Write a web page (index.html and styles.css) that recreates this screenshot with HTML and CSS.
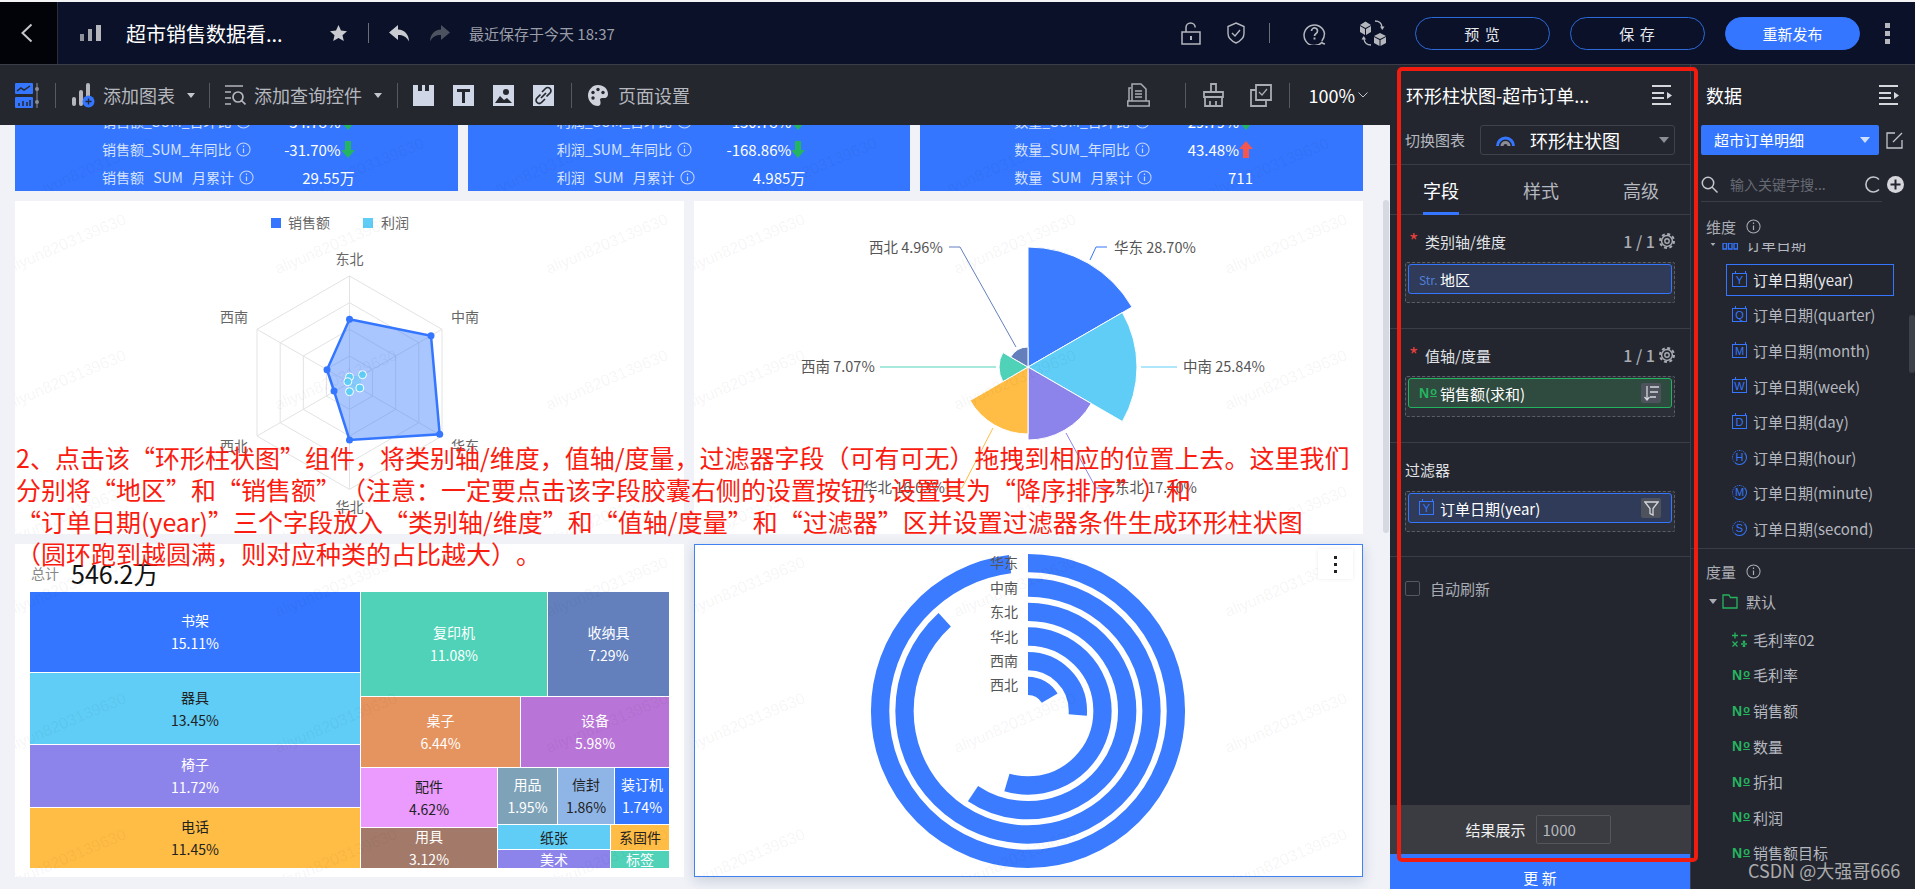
FILE: index.html
```html
<!DOCTYPE html>
<html lang="en">
<head>
    <meta charset="UTF-8">
    <meta name="viewport" content="width=device-width, initial-scale=1.0">
    <title>超市销售数据看板</title>
    <link rel="stylesheet" href="styles.css">
</head>
<body>
    <svg class="qb_defs" width="0" height="0">
        <symbol id="i_collapse" viewBox="0 0 20 20">
            <path d="M0 1h19M0 8h12M0 13h12M0 19h19" stroke="#d5d7dc" stroke-width="2" fill="none"/>
            <path d="M15 7l5 3.5-5 3.5z" fill="#d5d7dc"/>
        </symbol>
        <symbol id="i_gear" viewBox="0 0 16 16">
            <circle cx="8" cy="8" r="5.4" fill="none" stroke="#a9acb3" stroke-width="1.5"/>
            <circle cx="8" cy="8" r="2.2" fill="none" stroke="#a9acb3" stroke-width="1.4"/>
            <circle cx="8" cy="8" r="7" fill="none" stroke="#a9acb3" stroke-width="2" stroke-dasharray="3 2.5"/>
        </symbol>
        <symbol id="i_info" viewBox="0 0 16 16">
            <circle cx="8" cy="8" r="7" fill="none" stroke="currentColor" stroke-width="1.1"/>
            <path d="M8 6.8v5M8 3.8v1.5" stroke="currentColor" stroke-width="1.3"/>
        </symbol>
    </svg>

    <header class="qb_header">
        <a class="qb_back">
            <svg width="13" height="20" viewBox="0 0 13 20"><polyline points="11.5,1.5 2.5,10 11.5,18.5" fill="none" stroke="#c4c6cc" stroke-width="2"/></svg>
        </a>
        <svg class="qb_hd_bars" width="21" height="16" viewBox="0 0 21 16">
            <rect x="0" y="9" width="4" height="7" fill="#8f9198"/>
            <rect x="8" y="4" width="4" height="12" fill="#a5a7ad"/>
            <rect x="16" y="0" width="5" height="16" fill="#b5b7bd"/>
        </svg>
        <div class="qb_hd_title">超市销售数据看...</div>
        <svg class="qb_hd_star" width="17" height="16" viewBox="0 0 17 16"><polygon points="8.5,0 11,5.6 17,6.2 12.5,10.2 13.8,16 8.5,13 3.2,16 4.5,10.2 0,6.2 6,5.6" fill="#c9cbd1"/></svg>
        <span class="qb_hd_div"></span>
        <svg class="qb_hd_undo" width="21" height="17" viewBox="0 0 21 17"><path d="M9 0L0 7.5 9 15V10C14 10 17.500 11.500 20 16.500 20 9.500 15.500 4.800 9 4.500Z" fill="#c9cbd1"/></svg>
        <svg class="qb_hd_redo" width="21" height="17" viewBox="0 0 21 17"><path d="M12 0L21 7.500 12 15V10C7 10 3.500 11.500 1 16.500 1 9.500 5.500 4.800 12 4.500Z" fill="#4d5260"/></svg>
        <div class="qb_hd_saved">最近保存于今天 18:37</div>

        <div class="qb_hd_right">
            <svg width="20" height="23" viewBox="0 0 20 23" fill="none" stroke="#b5b7bd" stroke-width="1.5">
                <rect x="1" y="10" width="18" height="12"/>
                <path d="M5 10V5.500a4.600 4.600 0 0 1 9.200 0"/>
                <path d="M10 14v4" stroke-width="2"/>
            </svg>
            <svg class="qb_hd_shield" width="18" height="22" viewBox="0 0 18 22" fill="none" stroke="#b5b7bd" stroke-width="1.4">
                <path d="M9 1l8 3.500v7C17 16 13.500 19 9 21 4.500 19 1 16 1 11.500v-7z"/>
                <path d="M5 11l3 3 5-6"/>
            </svg>
            <span class="qb_hd_div qb_hd_div2"></span>
            <svg class="qb_hd_help" width="23" height="23" viewBox="0 0 23 23" fill="none" stroke="#b5b7bd" stroke-width="1.5">
                <path d="M22 22c-1.500-.3-2.500-.8-3.200-1.600A10.300 10.300 0 1 1 21.500 11.500c0 3-1 5.500-2.700 7.500"/>
                <path d="M8.500 9a3 3 0 1 1 4.600 2.500c-1 .7-1.600 1.300-1.600 2.500" stroke-width="1.700"/>
                <path d="M11.500 15.500v2" stroke-width="1.900"/>
            </svg>
            <svg class="qb_hd_cube" width="26" height="26" viewBox="0 0 26 26" fill="#b5b7bd">
                <path d="M0 5l5.500-3.500L11 5 5.500 8zM0 6l5 3v6l-5-3zM11 6L6 9v6l5-3z"/>
                <path d="M14 16l6-3 6 3-6 3zM14 17l5.500 3v6L14 23zM26 17l-5.500 3v6l5.500-3z"/>
                <path d="M15 1c4 0 6.500 2 7 6" fill="none" stroke="#b5b7bd" stroke-width="1.300"/>
                <path d="M20 6.500h4.500L22.300 10z"/>
                <path d="M11 25c-4 0-6.500-2-7-6" fill="none" stroke="#b5b7bd" stroke-width="1.300"/>
                <path d="M6 19.500H1.500L3.700 16z"/>
            </svg>
            <a class="qb_hd_btn">预 览</a>
            <a class="qb_hd_btn">保 存</a>
            <a class="qb_hd_btn qb_hd_btn_on">重新发布</a>
            <span class="qb_hd_dots"><i></i><i></i><i></i></span>
        </div>
    </header>

    <div class="qb_body">
        <section class="qb_editor">
            <div class="qb_toolbar">
                <svg class="qb_tb_layout" width="25" height="25" viewBox="0 0 25 25">
                    <rect x="0" y="0" width="18" height="11" rx="1" fill="#3476ff"/>
                    <rect x="0" y="14" width="18" height="11" rx="1" fill="#3476ff"/>
                    <path d="M2 8l4-3 3 2 6-4" fill="none" stroke="#25272e" stroke-width="1.500"/>
                    <path d="M4 23v-3M8 23v-5M12 23v-4M15 23v-6" stroke="#25272e" stroke-width="1.500"/>
                    <path d="M22 0v25" stroke="#8b8e96" stroke-width="1"/>
                    <circle cx="22" cy="6" r="2" fill="#8b8e96"/>
                    <circle cx="22" cy="19" r="2" fill="#8b8e96"/>
                </svg>
                <span class="qb_tb_div"></span>
                <svg class="qb_tb_add" width="23" height="25" viewBox="0 0 23 25">
                    <rect x="0" y="14" width="4" height="9" rx="2" fill="#b5b7bd"/>
                    <rect x="7" y="7" width="4" height="16" rx="2" fill="#b5b7bd"/>
                    <rect x="14" y="0" width="4" height="16" rx="2" fill="#b5b7bd"/>
                    <circle cx="16.500" cy="18.500" r="6" fill="#3476ff"/>
                    <path d="M13.500 18.500h6M16.500 15.500v6" stroke="#25272e" stroke-width="1.300"/>
                </svg>
                <span class="qb_tb_text">添加图表</span>
                <i class="qb_caret"></i>
                <span class="qb_tb_div qb_tb_div_b"></span>
                <svg class="qb_tb_query" width="21" height="21" viewBox="0 0 21 21" fill="none" stroke="#b5b7bd" stroke-width="1.700">
                    <path d="M0 1h18M0 7h6M0 13h6M0 19h6"/>
                    <circle cx="13" cy="12" r="5"/>
                    <path d="M16.500 15.500l4 4"/>
                </svg>
                <span class="qb_tb_text qb_tb_text_q">添加查询控件</span>
                <i class="qb_caret qb_caret_q"></i>
                <span class="qb_tb_div qb_tb_div_c"></span>
                <svg class="qb_tb_icon" width="21" height="21" viewBox="0 0 21 21"><path d="M0 0h5v6h4V0h3v6h4V0h5v21H0z" fill="#cfd6e6"/></svg>
                <svg class="qb_tb_icon" width="21" height="21" viewBox="0 0 21 21"><rect width="21" height="21" fill="#cfd6e6"/><path d="M4 4h13v3h-5v11H9V7H4z" fill="#25272e"/></svg>
                <svg class="qb_tb_icon" width="21" height="21" viewBox="0 0 21 21"><rect width="21" height="21" fill="#cfd6e6"/><circle cx="13" cy="7" r="3" fill="#25272e"/><path d="M2 18l5-7 4 4 3-2 5 5z" fill="#25272e"/></svg>
                <svg class="qb_tb_icon" width="21" height="21" viewBox="0 0 21 21"><rect width="21" height="21" fill="#cfd6e6"/><g fill="none" stroke="#25272e" stroke-width="1.700"><path d="M9 7l3.500-3.500a3 3 0 0 1 4.500 4.500L13.500 11.500"/><path d="M12 14l-3.500 3.500a3 3 0 0 1-4.500-4.500L7.500 9.500"/><path d="M8 13l5-5"/></g></svg>
                <span class="qb_tb_div qb_tb_div_d"></span>
                <svg class="qb_tb_palette" width="20" height="21" viewBox="0 0 20 21">
                    <path d="M10 0c5.500 0 10 3.800 10 9 0 3.500-3 4.500-5 4-2-.4-3.500.6-2.800 2.600.6 1.800.8 5.400-2.200 5.400C4.500 21 0 16 0 10.500S4.500 0 10 0z" fill="#cfd2da"/>
                    <circle cx="5" cy="7.500" r="1.700" fill="#25272e"/><circle cx="10" cy="4.500" r="1.700" fill="#25272e"/><circle cx="15" cy="7.500" r="1.700" fill="#25272e"/><circle cx="5" cy="13" r="1.700" fill="#25272e"/>
                </svg>
                <span class="qb_tb_text qb_tb_text_p">页面设置</span>
                <div class="qb_tb_right">
                    <svg width="23" height="24" viewBox="0 0 23 24" fill="none" stroke="#a9acb3" stroke-width="1.500">
                        <path d="M5 18V1h9l5 5v12M4 5H2v13"/>
                        <path d="M8 8h7M8 11h7M8 14h7"/>
                        <path d="M0.800 18h21.400v5H.800z"/>
                    </svg>
                    <span class="qb_tb_div qb_tb_div_e"></span>
                    <svg class="qb_tb_brush" width="21" height="24" viewBox="0 0 21 24" fill="none" stroke="#a9acb3" stroke-width="1.800">
                        <path d="M8 8V1h5v7M1 9h19v5H1zM2 14v9h17v-9M7 18v5M13 18v5"/>
                    </svg>
                    <svg class="qb_tb_copy" width="22" height="23" viewBox="0 0 22 23" fill="none" stroke="#a9acb3" stroke-width="1.800">
                        <path d="M6 1h15v15H6zM6 6H1v16h15v-6"/>
                        <path d="M9 8l3 3 5-6" stroke-width="1.300"/>
                    </svg>
                    <span class="qb_tb_div qb_tb_div_f"></span>
                    <span class="qb_tb_zoom">100%</span>
                    <svg width="10" height="6" viewBox="0 0 10 6"><polyline points="0.500,.500 5,5 9.500,.500" fill="none" stroke="#c4c6cc" stroke-width="1"/></svg>
                </div>
            </div>

            <div class="qb_canvas">
                <div class="qb_kpi_row">
                    <div class="qb_kpi qb_kpi_a">
                        <div class="qb_wm" data-n="2"></div>
                        <div class="qb_kpi_line"><span>销售额_SUM_日环比</span><svg class="qb_i_info"><use href="#i_info"/></svg><b>-34.78%</b><svg class="qb_arrow" viewBox="0 0 14 17"><path d="M4 0h6v9h4l-7 8-7-8h4z" fill="#25b45f"/></svg></div>
                        <div class="qb_kpi_line"><span>销售额_SUM_年同比</span><svg class="qb_i_info"><use href="#i_info"/></svg><b>-31.70%</b><svg class="qb_arrow" viewBox="0 0 14 17"><path d="M4 0h6v9h4l-7 8-7-8h4z" fill="#25b45f"/></svg></div>
                        <div class="qb_kpi_line"><span class="qb_kpi_sp">销售额 SUM 月累计</span><svg class="qb_i_info"><use href="#i_info"/></svg><b>29.55万</b></div>
                    </div>
                    <div class="qb_kpi qb_kpi_b">
                        <div class="qb_wm" data-n="2"></div>
                        <div class="qb_kpi_line"><span>利润_SUM_日环比</span><svg class="qb_i_info"><use href="#i_info"/></svg><b>-130.78%</b><svg class="qb_arrow" viewBox="0 0 14 17"><path d="M4 0h6v9h4l-7 8-7-8h4z" fill="#25b45f"/></svg></div>
                        <div class="qb_kpi_line"><span>利润_SUM_年同比</span><svg class="qb_i_info"><use href="#i_info"/></svg><b>-168.86%</b><svg class="qb_arrow" viewBox="0 0 14 17"><path d="M4 0h6v9h4l-7 8-7-8h4z" fill="#25b45f"/></svg></div>
                        <div class="qb_kpi_line"><span class="qb_kpi_sp">利润 SUM 月累计</span><svg class="qb_i_info"><use href="#i_info"/></svg><b>4.985万</b></div>
                    </div>
                    <div class="qb_kpi qb_kpi_c">
                        <div class="qb_wm" data-n="2"></div>
                        <div class="qb_kpi_line"><span>数量_SUM_日环比</span><svg class="qb_i_info"><use href="#i_info"/></svg><b>29.79%</b><svg class="qb_arrow" viewBox="0 0 14 17"><path d="M4 0h6v9h4l-7 8-7-8h4z" fill="#25b45f"/></svg></div>
                        <div class="qb_kpi_line"><span>数量_SUM_年同比</span><svg class="qb_i_info"><use href="#i_info"/></svg><b>43.48%</b><svg class="qb_arrow" viewBox="0 0 14 17"><path d="M7 0l7 8h-4v9H4V8H0z" fill="#f4574f"/></svg></div>
                        <div class="qb_kpi_line"><span class="qb_kpi_sp">数量 SUM 月累计</span><svg class="qb_i_info"><use href="#i_info"/></svg><b>711</b></div>
                    </div>
                </div>

                <div class="qb_chart_grid">
                    <!-- radar -->
                    <div class="qb_card">
                        <svg class="qb_chart" width="669" height="333" viewBox="15 201 669 333">
                            <rect x="271" y="218" width="10" height="10" fill="#3476ff"/>
                            <text x="288" y="228" class="qb_ct">销售额</text>
                            <rect x="363" y="218" width="10" height="10" fill="#5fcdf6"/>
                            <text x="381" y="228" class="qb_ct">利润</text>
                            <g fill="none" stroke="#e3e3e3" stroke-width="1">
                                <polygon points="349.500,276 442,329.300 442,436 349.500,489.400 257,436 257,329.300"/>
                                <polygon points="349.500,302.700 418.800,342.700 418.800,422.700 349.500,462.700 280.200,422.700 280.200,342.700"/>
                                <polygon points="349.500,329.300 395.700,356 395.700,409.400 349.500,436 303.300,409.400 303.300,356"/>
                                <polygon points="349.500,356 372.600,369.300 372.600,396 349.500,409.400 326.400,396 326.400,369.300"/>
                                <path d="M349.500 276V489.400M257 329.300L442 436M442 329.300L257 436"/>
                            </g>
                            <polygon points="349.500,319.300 431,335.700 439.700,434.300 349.500,440 334,391 327,369.700" fill="#3476ff" fill-opacity=".42" stroke="#3476ff" stroke-width="2.500"/>
                            <g fill="#3476ff">
                                <circle cx="349.500" cy="319.300" r="3.500"/><circle cx="431" cy="335.700" r="3.500"/><circle cx="439.700" cy="434.300" r="3.500"/>
                                <circle cx="349.500" cy="440" r="3.500"/><circle cx="334" cy="391" r="3.500"/><circle cx="327" cy="369.700" r="3.500"/>
                            </g>
                            <polygon points="349.500,377 362.500,374.700 359.800,388 349.500,391.700 347.800,381.700" fill="#5fcdf6" fill-opacity=".5"/>
                            <g fill="#5fcdf6" stroke="#fff" stroke-width="1">
                                <circle cx="349.500" cy="377" r="4"/><circle cx="362.500" cy="374.700" r="4"/><circle cx="359.800" cy="388" r="4"/>
                                <circle cx="349.500" cy="391.700" r="4"/><circle cx="347.800" cy="381.700" r="4"/>
                            </g>
                            <g class="qb_ct" text-anchor="middle">
                                <text x="349.500" y="264">东北</text><text x="465" y="322">中南</text><text x="234" y="322">西南</text>
                                <text x="465" y="451">华东</text><text x="234" y="451">西北</text><text x="349.500" y="512">华北</text>
                            </g>
                        </svg>
                        <div class="qb_wm"></div>
                    </div>

                    <!-- rose pie -->
                    <div class="qb_card">
                        <svg class="qb_chart" width="669" height="333" viewBox="694 201 669 333">
                            <g stroke="#fff" stroke-width="1">
                                <path d="M1028 367V247A120 120 0 0 1 1132 307Z" fill="#3b7bff"/>
                                <path d="M1028 367L1122.400 312.500A109 109 0 0 1 1122.400 421.500Z" fill="#5fcdf6"/>
                                <path d="M1028 367L1091.200 403.500A73 73 0 0 1 1028 440Z" fill="#8d84eb"/>
                                <path d="M1028 367V434A67 67 0 0 1 970 400.500Z" fill="#ffbd45"/>
                                <path d="M1028 367L1002.900 381.500A29 29 0 0 1 1002.900 352.500Z" fill="#4fd2b8"/>
                                <path d="M1028 367L1010.700 357A20 20 0 0 1 1028 347Z" fill="#6380bc"/>
                            </g>
                            <g fill="none" stroke-width="1">
                                <polyline points="1090,260 1096,247 1107,247" stroke="#3476ff"/>
                                <polyline points="1016,347 960,247 949,247" stroke="#6380bc"/>
                                <polyline points="1141,367 1177,367" stroke="#5fcdf6"/>
                                <polyline points="996,367 880,367" stroke="#4fd2b8"/>
                                <polyline points="993,428 962,488 945,488" stroke="#ffbd45"/>
                                <polyline points="1066,433 1096,488 1108,488" stroke="#8d84eb"/>
                            </g>
                            <g class="qb_ct qb_ct_l">
                                <text x="1114" y="253">华东 28.70%</text>
                                <text x="869" y="253">西北 4.96%</text>
                                <text x="1183" y="372">中南 25.84%</text>
                                <text x="801" y="372">西南 7.07%</text>
                                <text x="863" y="493">华北 16.03%</text>
                                <text x="1115" y="493">东北 17.40%</text>
                            </g>
                        </svg>
                        <div class="qb_wm"></div>
                    </div>

                    <!-- treemap -->
                    <div class="qb_card qb_tree_card">
                        <div class="qb_tree_head"><span class="qb_tree_lbl">总计</span><span class="qb_tree_total">546.2万</span></div>
                        <div class="qb_tree">
                            <div class="qb_tree_col" style="width:330px">
                                <div class="qb_tile qb_c1" style="height:80px">书架<br>15.11%</div>
                                <div class="qb_tile qb_c2" style="height:71px">器具<br>13.45%</div>
                                <div class="qb_tile qb_c3" style="height:62px">椅子<br>11.72%</div>
                                <div class="qb_tile qb_c4" style="height:60px">电话<br>11.45%</div>
                            </div>
                            <div class="qb_tree_col" style="width:308px">
                                <div class="qb_tree_row" style="height:104px">
                                    <div class="qb_tile qb_c5" style="width:186px">复印机<br>11.08%</div>
                                    <div class="qb_tile qb_c6" style="width:121px">收纳具<br>7.29%</div>
                                </div>
                                <div class="qb_tree_row" style="height:70px">
                                    <div class="qb_tile qb_c7" style="width:159px">桌子<br>6.44%</div>
                                    <div class="qb_tile qb_c8" style="width:148px">设备<br>5.98%</div>
                                </div>
                                <div class="qb_tree_row" style="height:100px">
                                    <div class="qb_tree_col" style="width:136px">
                                        <div class="qb_tile qb_c9" style="height:59px">配件<br>4.62%</div>
                                        <div class="qb_tile qb_c10" style="height:40px">用具<br>3.12%</div>
                                    </div>
                                    <div class="qb_tree_col" style="width:171px">
                                        <div class="qb_tree_row" style="height:56px">
                                            <div class="qb_tile qb_c11" style="width:59px">用品<br>1.95%</div>
                                            <div class="qb_tile qb_c12" style="width:56px">信封<br>1.86%</div>
                                            <div class="qb_tile qb_c1" style="width:54px">装订机<br>1.74%</div>
                                        </div>
                                        <div class="qb_tree_row" style="height:43px">
                                            <div class="qb_tree_col" style="width:112px">
                                                <div class="qb_tile qb_c2" style="height:24px">纸张</div>
                                                <div class="qb_tile qb_c3" style="height:18px">美术</div>
                                            </div>
                                            <div class="qb_tree_col" style="width:58px">
                                                <div class="qb_tile qb_c4" style="height:25px">系固件</div>
                                                <div class="qb_tile qb_c5" style="height:17px">标签</div>
                                            </div>
                                        </div>
                                    </div>
                                </div>
                            </div>
                        </div>
                        <div class="qb_wm"></div>
                    </div>

                    <!-- ring bars -->
                    <div class="qb_card qb_card_sel">
                        <svg class="qb_chart" width="669" height="333" viewBox="694 544 669 333">
                            <g fill="none" stroke="#3b7bff" stroke-width="18.300" transform="rotate(-90 1028 711)">
                                <circle cx="1028" cy="711" r="147.900" pathLength="360" stroke-dasharray="353 360"/>
                                <circle cx="1028" cy="711" r="123.500" pathLength="360" stroke-dasharray="317.600 360"/>
                                <circle cx="1028" cy="711" r="99.200" pathLength="360" stroke-dasharray="213.700 360"/>
                                <circle cx="1028" cy="711" r="74.500" pathLength="360" stroke-dasharray="196.500 360"/>
                                <circle cx="1028" cy="711" r="49.900" pathLength="360" stroke-dasharray="94.600 360"/>
                                <circle cx="1028" cy="711" r="25.200" pathLength="360" stroke-dasharray="59.400 360"/>
                            </g>
                            <g class="qb_ct qb_ct_r" text-anchor="end">
                                <text x="1018" y="568">华东</text><text x="1018" y="593">中南</text><text x="1018" y="617">东北</text>
                                <text x="1018" y="642">华北</text><text x="1018" y="666">西南</text><text x="1018" y="690">西北</text>
                            </g>
                        </svg>
                        <div class="qb_wm"></div>
                        <div class="qb_card_more"><i></i><i></i><i></i></div>
                    </div>
                </div>
                <div class="qb_canvas_bar"></div>
            </div>
        </section>

        <aside class="qb_props">
            <div class="qb_panel_head">
                <span>环形柱状图-超市订单...</span>
                <svg class="qb_collapse"><use href="#i_collapse"/></svg>
            </div>
            <div class="qb_switch">
                <span class="qb_switch_lbl">切换图表</span>
                <div class="qb_switch_sel">
                    <svg width="19" height="12" viewBox="0 0 19 12" fill="none" stroke-width="3">
                        <path d="M1.500 12a8 8 0 0 1 16 0" stroke="#3476ff"/>
                        <path d="M6 12a3.500 3.500 0 0 1 7 0" stroke="#8b8e96"/>
                    </svg>
                    <span>环形柱状图</span>
                    <i class="qb_caret qb_caret_sel"></i>
                </div>
            </div>
            <div class="qb_tabs">
                <span class="qb_tab qb_tab_on">字段</span>
                <span class="qb_tab">样式</span>
                <span class="qb_tab">高级</span>
            </div>

            <div class="qb_sect">
                <div class="qb_sect_title"><em>*</em><span>类别轴/维度</span><b>1 / 1</b><svg class="qb_gear"><use href="#i_gear"/></svg></div>
                <div class="qb_drop">
                    <div class="qb_pill"><span class="qb_str">Str.</span>地区</div>
                </div>
            </div>
            <div class="qb_sect">
                <div class="qb_sect_title"><em>*</em><span>值轴/度量</span><b>1 / 1</b><svg class="qb_gear"><use href="#i_gear"/></svg></div>
                <div class="qb_drop">
                    <div class="qb_pill qb_pill_g"><span class="qb_no">N<u>o</u></span>销售额(求和)
                        <span class="qb_pill_btn">
                            <svg width="15" height="15" viewBox="0 0 15 15" fill="none" stroke="#d5d7dc" stroke-width="1.300"><path d="M3 0v14M.500 11L3 14l2.500-3M6 1h9M6 6h8M6 11h6"/></svg>
                        </span>
                    </div>
                </div>
            </div>
            <div class="qb_sect">
                <div class="qb_sect_title qb_sect_title_f"><span>过滤器</span></div>
                <div class="qb_drop">
                    <div class="qb_pill"><span class="qb_dt">Y</span>订单日期(year)
                        <span class="qb_pill_btn">
                            <svg width="15" height="15" viewBox="0 0 15 15" fill="none" stroke="#d5d7dc" stroke-width="1.300"><path d="M.800 1h13.400L9 7.500v6.500l-3-1.500v-5z"/></svg>
                        </span>
                    </div>
                </div>
            </div>
            <label class="qb_auto"><span class="qb_check"></span>自动刷新</label>
            <div class="qb_result">
                <span>结果展示</span>
                <span class="qb_result_box">1000</span>
            </div>
            <div class="qb_update">更 新</div>
        </aside>

        <aside class="qb_data">
            <div class="qb_panel_head qb_panel_head_d">
                <span>数据</span>
                <svg class="qb_collapse"><use href="#i_collapse"/></svg>
            </div>
            <div class="qb_ds">
                <div class="qb_ds_sel">超市订单明细<i class="qb_caret qb_caret_ds"></i></div>
                <svg width="17" height="17" viewBox="0 0 17 17" fill="none" stroke="#c4c6cc" stroke-width="1.300"><path d="M9 1H1v15h15V8M7 10L16 1"/></svg>
            </div>
            <div class="qb_search_row">
                <div class="qb_search">
                    <svg width="17" height="17" viewBox="0 0 17 17" fill="none" stroke="#c4c6cc" stroke-width="1.500"><circle cx="7" cy="7" r="5.700"/><path d="M11 11l5.500 5.500"/></svg>
                    <span>输入关键字搜...</span>
                    <svg class="qb_refresh" width="17" height="17" viewBox="0 0 17 17" fill="none" stroke="#c4c6cc" stroke-width="1.600"><path d="M15 3.500A7.500 7.500 0 1 0 15 13.500"/></svg>
                </div>
                <svg width="17" height="17" viewBox="0 0 17 17"><circle cx="8.500" cy="8.500" r="8.500" fill="#d5d7dc"/><path d="M3.500 8.500h10M8.500 3.500v10" stroke="#23262f" stroke-width="2"/></svg>
            </div>
            <div class="qb_group_head qb_group_head_a">维度<svg class="qb_i_group"><use href="#i_info"/></svg></div>
            <div class="qb_list">
                <div class="qb_list_in">
                    <div class="qb_field qb_field_top"><i class="qb_fold"></i>
                        <svg class="qb_hier" width="16" height="13" viewBox="0 0 16 13" fill="none" stroke="#3476ff" stroke-width="1.300"><path d="M1 6h3.500v6H1zM6.500 6H10v6H6.500zM12 6h3.500v6H12zM2.700 6V2M8.200 6V2M13.700 6V2"/></svg>
                        <span>订单日期</span></div>
                    <div class="qb_field qb_field_sel"><span class="qb_dt">Y</span>订单日期(year)</div>
                    <div class="qb_field"><span class="qb_dt">Q</span>订单日期(quarter)</div>
                    <div class="qb_field"><span class="qb_dt">M</span>订单日期(month)</div>
                    <div class="qb_field"><span class="qb_dt">W</span>订单日期(week)</div>
                    <div class="qb_field"><span class="qb_dt">D</span>订单日期(day)</div>
                    <div class="qb_field"><span class="qb_dt qb_dt_r">H</span>订单日期(hour)</div>
                    <div class="qb_field"><span class="qb_dt qb_dt_r">M</span>订单日期(minute)</div>
                    <div class="qb_field"><span class="qb_dt qb_dt_r">S</span>订单日期(second)</div>
                </div>
            </div>
            <div class="qb_group_head qb_group_head_b">度量<svg class="qb_i_group"><use href="#i_info"/></svg></div>
            <div class="qb_field qb_field_top qb_field_dflt"><i class="qb_fold"></i>
                <svg class="qb_hier" width="16" height="15" viewBox="0 0 16 15" fill="none" stroke="#25b45f" stroke-width="1.300"><path d="M1 1h6l1.500 2.500H15V14H1z"/></svg>
                <span>默认</span></div>
            <div class="qb_field"><svg class="qb_calc" width="15" height="15" viewBox="0 0 15 15" stroke="#25b45f" stroke-width="1.300"><path d="M0 3.500h6M3 .500v6M9 3.500h6M.500 9.500l5 5M5.500 9.500l-5 5M9 12h6"/><circle cx="12" cy="9.800" r=".7"/><circle cx="12" cy="14.200" r=".7"/></svg>毛利率02</div>
            <div class="qb_field"><span class="qb_no">N<u>o</u></span>毛利率</div>
            <div class="qb_field"><span class="qb_no">N<u>o</u></span>销售额</div>
            <div class="qb_field"><span class="qb_no">N<u>o</u></span>数量</div>
            <div class="qb_field"><span class="qb_no">N<u>o</u></span>折扣</div>
            <div class="qb_field"><span class="qb_no">N<u>o</u></span>利润</div>
            <div class="qb_field"><span class="qb_no">N<u>o</u></span>销售额目标</div>
            <div class="qb_data_bar"></div>
        </aside>
    </div>

    <div class="qb_redbox"></div>
    <div class="qb_note">2、点击该“环形柱状图”组件，将类别轴/维度，值轴/度量，过滤器字段（可有可无）拖拽到相应的位置上去。这里我们
分别将“地区”和“销售额”（注意：一定要点击该字段胶囊右侧的设置按钮，设置其为“降序排序”）和
“订单日期(year)”三个字段放入“类别轴/维度”和“值轴/度量”和“过滤器”区并设置过滤器条件生成环形柱状图
（圆环跑到越圆满，则对应种类的占比越大）。</div>
    <div class="qb_csdn">CSDN @大强哥666</div>

    <script src="script.js"></script>
</body>
</html>
```
FILE: styles.css
```css
* {
    margin: 0;
    padding: 0;
    box-sizing: border-box;
}

body {
    font-family: "Noto Sans CJK SC", "Liberation Sans", sans-serif;
    background: #f4f4f6;
    color: #333;
    width: 1915px;
    height: 889px;
    overflow: hidden;
    padding-top: 2px;
    position: relative;
}

.qb_defs {
    position: absolute;
}

/* top bar */
.qb_header {
    height: 63px;
    display: flex;
    align-items: center;
    background: #0a1128;
    border-bottom: 1px solid #3a3d47;
}

.qb_back {
    width: 58px;
    height: 100%;
    background: #020308;
    border-right: 1px solid #2a2f3d;
    display: flex;
    align-items: center;
    justify-content: center;
    padding-right: 5px;
}

.qb_hd_bars {
    margin-left: 22px;
}

.qb_hd_title {
    margin-left: 25px;
    width: 204px;
    font-size: 20px;
    color: #fff;
}

.qb_hd_div {
    width: 1px;
    height: 20px;
    background: #6b6e78;
    margin-left: 21px;
}

.qb_hd_undo {
    margin-left: 20px;
}

.qb_hd_redo {
    margin-left: 19px;
}

.qb_hd_saved {
    margin-left: 19px;
    font-size: 15px;
    color: #9a9ea8;
}

.qb_hd_right {
    margin-left: auto;
    display: flex;
    align-items: center;
    height: 100%;
}

.qb_hd_shield {
    margin-left: 26px;
}

.qb_hd_div2 {
    margin-left: 24px;
}

.qb_hd_help {
    margin-left: 33px;
}

.qb_hd_cube {
    margin-left: 34px;
    margin-right: 29px;
}

.qb_hd_btn {
    width: 135px;
    height: 33px;
    line-height: 31px;
    margin-right: 20px;
    text-align: center;
    border: 1px solid #2c69d8;
    border-radius: 17px;
    font-size: 15px;
    color: #e6e8ee;
    letter-spacing: 1px;
}

.qb_hd_btn_on {
    background: #3476ff;
    border-color: #3476ff;
    color: #fff;
    letter-spacing: 0;
    margin-right: 25px;
}

.qb_hd_dots {
    display: flex;
    flex-direction: column;
    gap: 3px;
    margin-right: 25px;
}

.qb_hd_dots i {
    width: 5px;
    height: 5px;
    background: #b5b7bd;
}

/* layout */
.qb_body {
    display: flex;
    height: 824px;
}

.qb_editor {
    width: 1390px;
    display: flex;
    flex-direction: column;
    background: #f0f2f7;
}

/* toolbar */
.qb_toolbar {
    height: 60px;
    flex: none;
    display: flex;
    align-items: center;
    background: #25272e;
    padding-left: 15px;
}

.qb_tb_div {
    width: 1px;
    height: 25px;
    background: #565962;
    margin-left: 15px;
}

.qb_tb_add {
    margin-left: 16px;
}

.qb_tb_text {
    font-size: 18px;
    color: #b5b8bf;
    margin-left: 8px;
}

.qb_caret {
    width: 0;
    height: 0;
    border-left: 4px solid transparent;
    border-right: 4px solid transparent;
    border-top: 5px solid #c4c6cc;
    margin-left: 12px;
}

.qb_tb_query {
    margin-left: 15px;
}

.qb_tb_div_b {
    margin-left: 14px;
}

.qb_tb_text_q {
    margin-left: 8px;
}

.qb_tb_div_c {
    margin-left: 15px;
}

.qb_tb_icon {
    margin-left: 19px;
}

.qb_tb_div_c + .qb_tb_icon {
    margin-left: 15px;
}

.qb_tb_div_d {
    margin-left: 17px;
}

.qb_tb_palette {
    margin-left: 16px;
}

.qb_tb_text_p {
    margin-left: 10px;
}

.qb_tb_right {
    margin-left: auto;
    margin-right: 22px;
    display: flex;
    align-items: center;
}

.qb_tb_div_e {
    margin-left: 35px;
}

.qb_tb_brush {
    margin-left: 17px;
}

.qb_tb_copy {
    margin-left: 26px;
}

.qb_tb_div_f {
    margin-left: 17px;
}

.qb_tb_zoom {
    font-size: 18px;
    color: #fff;
    margin: 0 3px 0 18px;
}

/* canvas */
.qb_canvas {
    flex: 1;
    position: relative;
    overflow: hidden;
    padding: 0 27px 0 15px;
}

.qb_canvas_bar {
    position: absolute;
    top: 75px;
    right: 1px;
    width: 6px;
    height: 333px;
    background: #d6d9e2;
    border-radius: 3px;
}

.qb_kpi_row {
    display: grid;
    grid-template-columns: repeat(3, 1fr);
    gap: 10px;
    height: 66px;
}

.qb_kpi {
    background: #3476ff;
    overflow: hidden;
    position: relative;
    display: flex;
    flex-direction: column;
    justify-content: flex-end;
}

.qb_kpi .qb_wm {
    left: 27px;
}

.qb_kpi_a {
    padding: 0 103px 0 87px;
}

.qb_kpi_b {
    padding: 0 105px 0 89px;
}

.qb_kpi_c {
    padding: 0 110px 0 94px;
}

.qb_kpi_line {
    flex: none;
    height: 28px;
    display: flex;
    align-items: center;
    font-size: 14px;
    color: #d6e3ff;
}

.qb_kpi_sp {
    word-spacing: 6px;
}

.qb_kpi_line b {
    margin-left: auto;
    font-weight: 400;
    font-size: 15px;
    color: #fff;
}

.qb_i_info {
    width: 15px;
    height: 15px;
    margin-left: 5px;
    color: #c3d6ff;
}

.qb_arrow {
    width: 14px;
    height: 17px;
}

/* chart cards */
.qb_chart_grid {
    margin-top: 10px;
    display: grid;
    grid-template-columns: 669px 669px;
    grid-auto-rows: 333px;
    gap: 10px;
}

.qb_card {
    background: #fff;
    position: relative;
    overflow: hidden;
}

.qb_card_sel {
    outline: 1px solid #3f82f0;
    outline-offset: -1px;
    box-shadow: 0 4px 12px rgba(30, 50, 100, 0.18);
}

.qb_chart {
    display: block;
}

.qb_ct {
    font-size: 14px;
    fill: #666;
}

.qb_ct_l {
    font-size: 14.5px;
    fill: #555;
}

.qb_ct_r {
    fill: #555;
}

.qb_wm {
    position: absolute;
    inset: 0;
    overflow: hidden;
    pointer-events: none;
    display: grid;
    grid-template-columns: repeat(3, 271px);
    grid-auto-rows: 136px;
}

.qb_wm span {
    display: block;
    width: 130px;
    margin: 28px 0 0 1px;
    font-family: "Liberation Sans", sans-serif;
    font-size: 16px;
    line-height: 24px;
    color: rgba(0, 0, 0, 0.055);
    white-space: nowrap;
    transform: rotate(-23deg);
}

.qb_card_more {
    position: absolute;
    top: 5px;
    right: 10px;
    width: 35px;
    height: 30px;
    background: #fff;
    box-shadow: 0 0 4px rgba(0, 0, 0, 0.08);
    display: flex;
    flex-direction: column;
    align-items: center;
    justify-content: center;
    gap: 4px;
}

.qb_card_more i {
    width: 3px;
    height: 3px;
    background: #222;
}

/* treemap */
.qb_tree_card {
    padding: 0 15px;
}

.qb_tree_head {
    height: 48px;
    padding-top: 10px;
    display: flex;
    align-items: center;
}

.qb_tree_lbl {
    font-size: 14px;
    color: #888;
    margin-left: 1px;
}

.qb_tree_total {
    font-size: 25px;
    color: #111;
    margin-left: 12px;
}

.qb_tree {
    display: flex;
    gap: 1px;
    height: 276px;
}

.qb_tree_col {
    display: flex;
    flex-direction: column;
    gap: 1px;
}

.qb_tree_row {
    display: flex;
    gap: 1px;
}

.qb_tile {
    display: flex;
    align-items: center;
    justify-content: center;
    text-align: center;
    font-size: 14px;
    line-height: 23px;
    color: #fff;
    overflow: hidden;
}

.qb_c1 { background: #3476ff; }
.qb_c2 { background: #5fcdf6; color: #222; }
.qb_c3 { background: #8d84eb; }
.qb_c4 { background: #ffbd45; color: #222; }
.qb_c5 { background: #4fd2b8; }
.qb_c6 { background: #6380bc; }
.qb_c7 { background: #e6945f; }
.qb_c8 { background: #b874d6; }
.qb_c9 { background: #ea9bfd; color: #222; }
.qb_c10 { background: #a37a69; }
.qb_c11 { background: #7ea2b8; }
.qb_c12 { background: #8fb5e6; color: #222; }

/* property panel */
.qb_props {
    width: 301px;
    display: flex;
    flex-direction: column;
    background: #23262f;
    border-right: 1px solid #3a3d47;
}

.qb_panel_head {
    height: 60px;
    flex: none;
    display: flex;
    align-items: center;
    justify-content: space-between;
    padding: 0 18px 0 16px;
    font-size: 18px;
    color: #fff;
}

.qb_panel_head_d {
    padding: 0 16px 0 15px;
}

.qb_collapse {
    width: 20px;
    height: 20px;
}

.qb_switch {
    height: 40px;
    flex: none;
    display: flex;
    border-bottom: 1px solid #3a3d47;
    padding-left: 15px;
}

.qb_switch_lbl {
    font-size: 15px;
    color: #b5b8bf;
    line-height: 30px;
}

.qb_switch_sel {
    width: 195px;
    height: 30px;
    margin-left: 15px;
    border: 1px solid #3f424c;
    border-radius: 3px;
    display: flex;
    align-items: center;
    padding-left: 15px;
    font-size: 18px;
    color: #fff;
}

.qb_switch_sel span {
    margin-left: 15px;
}

.qb_caret_sel {
    margin-left: auto;
    margin-right: 5px;
    border-left-width: 5px;
    border-right-width: 5px;
    border-top: 6px solid #8b8e96;
}

.qb_tabs {
    height: 50px;
    flex: none;
    display: flex;
    border-bottom: 1px solid #3a3d47;
    padding-left: 33px;
    gap: 64px;
}

.qb_tab {
    height: 50px;
    line-height: 50px;
    font-size: 18px;
    color: #b5b8bf;
}

.qb_tab_on {
    color: #fff;
    border-bottom: 3px solid #3476ff;
}

.qb_sect {
    height: 114px;
    flex: none;
    padding: 15px 15px 0;
    border-bottom: 1px solid #3a3d47;
}

.qb_sect_title {
    height: 22px;
    display: flex;
    align-items: center;
    font-size: 15px;
    color: #e0e2e6;
    margin-bottom: 10px;
}

.qb_sect_title_f {
    margin-bottom: 11px;
}

.qb_sect_title em {
    color: #e8403c;
    font-style: normal;
    font-size: 20px;
    line-height: 22px;
    width: 20px;
    padding-left: 4px;
}

.qb_sect_title b {
    margin-left: auto;
    font-weight: 500;
    font-size: 16px;
    color: #a9acb3;
    margin-right: -2px;
}

.qb_gear {
    width: 16px;
    height: 16px;
    margin-left: 6px;
}

.qb_drop {
    height: 41px;
    padding: 2px;
    border: 1px dashed #5a5d66;
    border-radius: 2px;
    background: #2b2e36;
}

.qb_pill {
    height: 30px;
    margin: -1px 0 0 0;
    border: 1px solid #3476ff;
    border-radius: 3px;
    background: #2f3b58;
    display: flex;
    align-items: center;
    padding-left: 10px;
    font-size: 15px;
    color: #fff;
}

.qb_pill_g {
    background: #2f4a3e;
    border-color: #22b35e;
}

.qb_pill_btn {
    margin-left: auto;
    margin-right: 10px;
    width: 20px;
    height: 20px;
    background: #4d525c;
    border-radius: 2px;
    display: flex;
    align-items: center;
    justify-content: center;
}

.qb_str {
    width: 21px;
    font-size: 12px;
    color: #4f7fd8;
}

.qb_no {
    flex: none;
    width: 16px;
    margin-right: 5px;
    font-family: "Liberation Sans", sans-serif;
    font-size: 14px;
    font-weight: 700;
    color: #25b45f;
    display: flex;
    align-items: flex-start;
    line-height: 14px;
    letter-spacing: 0;
}

.qb_no u {
    font-size: 11px;
    line-height: 10px;
    margin-left: 1px;
}

.qb_dt {
    flex: none;
    position: relative;
    width: 15px;
    height: 14px;
    margin-right: 6px;
    border: 1px solid #3476ff;
    font-family: "Liberation Sans", sans-serif;
    font-size: 11px;
    line-height: 12px;
    text-align: center;
    color: #3476ff;
}

.qb_dt::before {
    content: "";
    position: absolute;
    top: -3px;
    left: 2px;
    width: 9px;
    height: 2px;
    border-left: 1px solid #3476ff;
    border-right: 1px solid #3476ff;
}

.qb_dt_r {
    height: 15px;
    border-radius: 50%;
    border-style: dotted solid solid dotted;
}

.qb_dt_r::before {
    display: none;
}

.qb_auto {
    display: flex;
    align-items: center;
    margin: 21px 0 0 15px;
    font-size: 15px;
    color: #a9acb3;
}

.qb_check {
    width: 15px;
    height: 15px;
    border: 1px solid #55585f;
    border-radius: 2px;
    margin-right: 10px;
}

.qb_result {
    margin-top: auto;
    height: 49px;
    flex: none;
    background: #3b3c42;
    display: flex;
    align-items: center;
    justify-content: center;
    font-size: 15px;
    color: #f0f0f0;
    padding-right: 4px;
}

.qb_result_box {
    width: 75px;
    height: 29px;
    line-height: 27px;
    margin-left: 10px;
    padding-left: 6px;
    border: 1px solid #55565d;
    border-radius: 2px;
    color: #b5b8bf;
}

.qb_update {
    height: 35px;
    flex: none;
    background: #3476ff;
    color: #fff;
    text-align: center;
    font-size: 15px;
    padding-top: 14px;
    line-height: 20px;
}

/* data panel */
.qb_data {
    width: 224px;
    background: #23262f;
    position: relative;
    overflow: hidden;
}

.qb_data_bar {
    position: absolute;
    top: 250px;
    right: 0;
    width: 6px;
    height: 58px;
    background: #3c4049;
    border-radius: 3px;
}

.qb_ds {
    display: flex;
    align-items: center;
    padding-left: 10px;
    gap: 7px;
}

.qb_ds_sel {
    width: 178px;
    height: 30px;
    background: #3476ff;
    border-radius: 2px;
    padding-left: 13px;
    font-size: 15px;
    line-height: 30px;
    color: #fff;
    display: flex;
    align-items: center;
}

.qb_caret_ds {
    margin-left: auto;
    margin-right: 9px;
    border-left-width: 5px;
    border-right-width: 5px;
    border-top: 6px solid #cfe0ff;
}

.qb_search_row {
    display: flex;
    align-items: center;
    gap: 5px;
    margin: 12px 0 0 10px;
    height: 35px;
}

.qb_search {
    width: 181px;
    height: 35px;
    display: flex;
    align-items: center;
    border-bottom: 1px solid #3a3d47;
    font-size: 14px;
    color: #666a73;
    padding-right: 1px;
}

.qb_search span {
    margin-left: 12px;
}

.qb_refresh {
    margin-left: auto;
}

.qb_group_head {
    height: 22px;
    display: flex;
    align-items: center;
    margin-left: 15px;
    font-size: 15px;
    color: #a9acb3;
}

.qb_group_head_a {
    margin-top: 13px;
    margin-bottom: 6px;
}

.qb_group_head_b {
    margin-top: 11px;
    margin-bottom: 2px;
}

.qb_i_group {
    width: 15px;
    height: 15px;
    margin-left: 10px;
}

.qb_list {
    height: 306px;
    overflow: hidden;
    border-bottom: 1px solid #3a3d47;
}

.qb_list_in {
    margin-top: -17px;
}

.qb_field {
    height: 35.6px;
    display: flex;
    align-items: center;
    padding-left: 41px;
    font-size: 15px;
    color: #b5b8bf;
}

.qb_field_top {
    padding-left: 18px;
}

.qb_field_dflt {
    margin-bottom: 2px;
}

.qb_field_top span {
    margin-left: 8px;
}

.qb_field_sel {
    width: 168px;
    height: 32px;
    margin: 2px 0 1.600px 35px;
    padding-left: 5px;
    border: 1px solid #3476ff;
    color: #e8e9ec;
}

.qb_fold {
    width: 0;
    height: 0;
    border-left: 4px solid transparent;
    border-right: 4px solid transparent;
    border-top: 5px solid #a9acb3;
    margin-right: 5px;
}

.qb_calc {
    margin-right: 6px;
    fill: #25b45f;
}

/* things lying over the page */
.qb_redbox {
    position: absolute;
    left: 1397px;
    top: 67px;
    width: 301px;
    height: 795px;
    border: 4px solid #f01c10;
    border-radius: 5px;
    pointer-events: none;
}

.qb_note {
    position: absolute;
    left: 16px;
    top: 441px;
    font-size: 25px;
    line-height: 32px;
    color: #fa1c10;
    white-space: pre;
    text-spacing-trim: space-all;
}

.qb_csdn {
    position: absolute;
    left: 1748px;
    top: 856px;
    font-size: 18px;
    line-height: 28px;
    color: rgba(225, 225, 225, 0.72);
    white-space: nowrap;
}
```
FILE: script.js
```js
// fill the watermark layers: 3 across and 3 down unless the layer says less
document.querySelectorAll(".qb_wm").forEach((el) => {
    const count = Number(el.dataset.n || 9);
    for (let i = 0; i < count; i++) {
        const s = document.createElement("span");
        s.textContent = "aliyun8203139630";
        el.appendChild(s);
    }
});
```
